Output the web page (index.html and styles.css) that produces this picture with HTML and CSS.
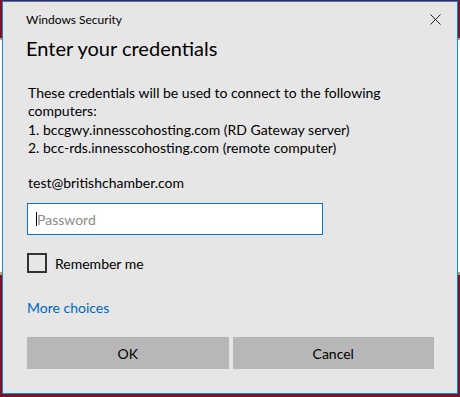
FILE: index.html
```html
<!DOCTYPE html>
<html lang="en">
<head>
  <meta charset="UTF-8">
  <title>Windows Security</title>
  <link rel="stylesheet" href="styles.css">
</head>
<body>

  <!-- Credential dialog -->
  <div class="dialog">
    <div class="titlebar">
      <span class="title">Windows Security</span>
      <button class="close" aria-label="Close">
        <svg width="11" height="11" viewBox="0 0 11 11">
          <path d="M0.5 0.5 L10.5 10.5 M10.5 0.5 L0.5 10.5" stroke="#222" stroke-width="1" fill="none"/>
        </svg>
      </button>
    </div>

    <div class="content">
      <h1>Enter your credentials</h1>
      <p class="info">
        These credentials will be used to connect to the following computers:<br>
        1. bccgwy.innesscohosting.com (RD Gateway server)<br>
        2. bcc-rds.innesscohosting.com (remote computer)
      </p>
      <p class="user">test@britishchamber.com</p>

      <div class="password">
        <span class="caret"></span>
        <span class="placeholder">Password</span>
      </div>

      <label class="remember">
        <span class="box"></span>
        Remember me
      </label>

      <a href="#" class="more">More choices</a>

      <div class="actions">
        <button class="btn">OK</button>
        <button class="btn">Cancel</button>
      </div>
    </div>
  </div>

</body>
</html>
```

FILE: styles.css
```css
/* Desktop behind the dialog */
body {
  margin: 0;
  height: 397px;
  overflow: hidden;
  font-family: Lato, "Noto Sans", sans-serif;
  color: #000;
  background: linear-gradient(to bottom,
    #7a1428 0, #7a1428 38px,
    #a6a877 38px, #a6a877 40px,
    #ffffff 40px, #ffffff 272px,
    #a6a877 272px, #a6a877 275px,
    #7a1428 275px);
}

/* Dialog window */
.dialog {
  box-sizing: border-box;
  width: 456px;
  height: 393px;
  margin: 1px 0 0 2px;
  background: #e6e6e6;
  border: 1px solid #1883d7;
  display: flex;
  flex-direction: column;
}
.titlebar {
  display: flex;
  align-items: center;
  justify-content: space-between;
  padding: 7px 16px 0 23px;
  height: 20px;
}
.title {
  font-size: 12px;
}
.close {
  border: none;
  background: none;
  padding: 0;
  width: 11px;
  height: 11px;
  display: flex;
}

.content {
  padding: 0 23px 0 24px;
  display: flex;
  flex-direction: column;
  align-items: flex-start;
}
.content h1 {
  margin: 5px 0 0 -1px;
  font-size: 20px;
  font-weight: 400;
  line-height: 28px;
}
.info {
  margin: 22px 0 0 1px;
  font-size: 14px;
  line-height: 18.3px;
}
.user {
  margin: 17px 0 0 1px;
  font-size: 14px;
  line-height: 18px;
}

/* Password field */
.password {
  box-sizing: border-box;
  margin-top: 11px;
  width: 296px;
  height: 32px;
  background: #fff;
  border: 1px solid #0078d7;
  display: flex;
  align-items: center;
  padding-left: 8px;
  font-size: 14px;
  color: #8a8a8a;
}
.caret {
  width: 1px;
  height: 14px;
  background: #000;
}

/* Checkbox */
.remember {
  margin-top: 18px;
  display: flex;
  align-items: center;
  gap: 8px;
  font-size: 14px;
}
.box {
  box-sizing: border-box;
  width: 20px;
  height: 20px;
  border: 2px solid #333;
}

.more {
  margin-top: 26px;
  font-size: 14px;
  color: #0067c0;
  text-decoration: none;
}

/* Buttons */
.actions {
  align-self: stretch;
  margin-top: 21px;
  display: flex;
  gap: 4px;
}
.btn {
  flex: 1;
  height: 32px;
  border: none;
  background: #b7b7b7;
  font-family: inherit;
  font-size: 14px;
  color: #000;
}
```
